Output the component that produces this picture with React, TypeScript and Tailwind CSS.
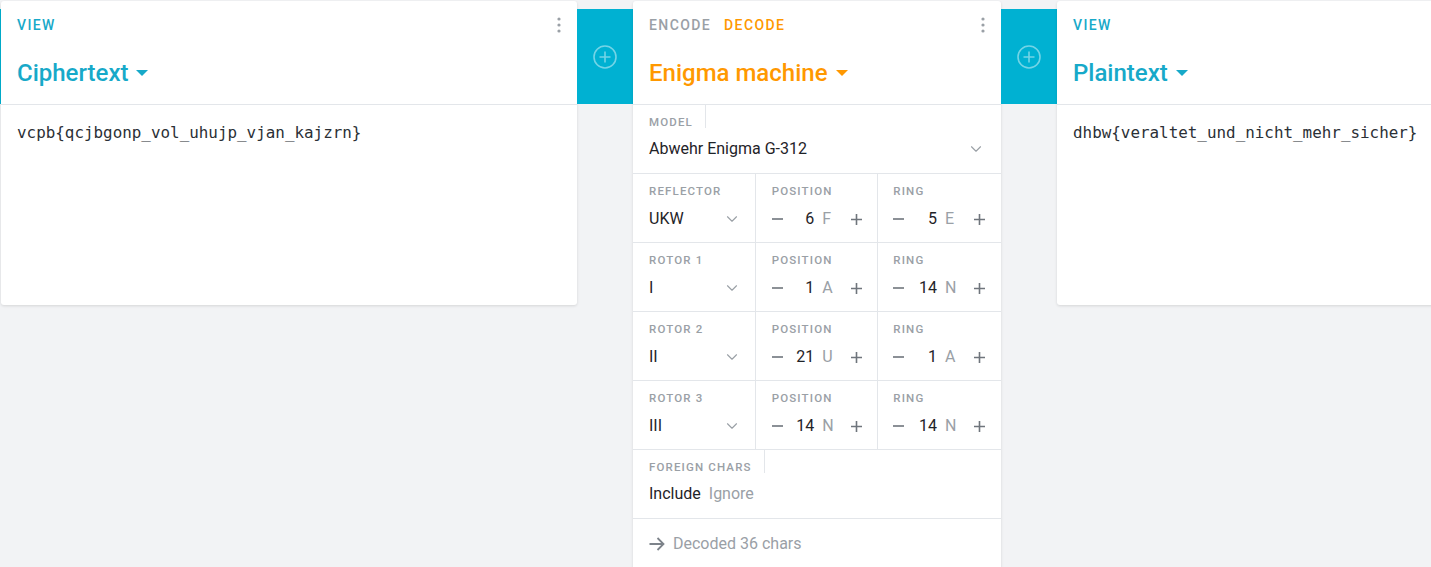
import { ChevronDown } from 'lucide-react';

const font = { fontFamily: 'Roboto, "Liberation Sans", sans-serif' };

function Dots() {
  return (
    <svg width="4" height="16" viewBox="0 0 4 16" className="text-[#9aa0a6]">
      <circle cx="2" cy="2" r="1.6" fill="currentColor" />
      <circle cx="2" cy="8" r="1.6" fill="currentColor" />
      <circle cx="2" cy="14" r="1.6" fill="currentColor" />
    </svg>
  );
}

function Caret({ color }: { color: string }) {
  return (
    <svg width="12" height="6" viewBox="0 0 12 6" className={`ml-[8px] ${color}`}>
      <path d="M0 0 L12 0 L6 6 Z" fill="currentColor" />
    </svg>
  );
}

function Connector() {
  return (
    <div className="w-[56px] flex-none">
      <div className="mt-[8px] flex h-[95px] items-center justify-center bg-[#00b1d2]">
        <svg width="24" height="24" viewBox="0 0 24 24" fill="none" stroke="rgba(255,255,255,0.45)" strokeWidth="1.6">
          <circle cx="12" cy="12" r="11" />
          <path d="M12 6.5v11M6.5 12h11" />
        </svg>
      </div>
    </div>
  );
}

function ViewCard({ title, text, width }: { title: string; text: string; width: string }) {
  return (
    <div className={`${width} h-[304px] flex-none rounded-[3px] bg-white shadow-[0_1px_3px_rgba(0,0,0,0.12)]`}>
      <div className="h-[104px] border-b border-[#e3e6ea] px-[16px] pt-[16px]">
        <div className="flex items-center justify-between">
          <span className="text-[14px] font-medium leading-[16px] tracking-[0.1em] text-[#17a9c9]">VIEW</span>
          <Dots />
        </div>
        <div className="mt-[26px] flex items-center">
          <span className="text-[24px] font-medium leading-[28px] text-[#17a9c9]">{title}</span>
          <Caret color="text-[#17a9c9]" />
        </div>
      </div>
      <div
        className="px-[16px] pt-[18px] text-[15.9px] leading-[20px] text-[#2b3036]"
        style={{ fontFamily: '"DejaVu Sans Mono", "Liberation Mono", monospace' }}
      >
        {text}
      </div>
    </div>
  );
}

function Label({ children, divider }: { children: string; divider?: boolean }) {
  return (
    <div className="flex">
      <div
        className={`pt-[10px] text-[11.5px] font-medium leading-[14px] tracking-[0.1em] text-[#9aa0a6] ${
          divider ? 'h-[23px] border-r border-[#e3e6ea] pr-[12px]' : ''
        }`}
      >
        {children}
      </div>
    </div>
  );
}

function Stepper({ value, letter }: { value: number; letter: string }) {
  return (
    <div className="mt-[11px] flex h-[20px] items-center text-[16px]">
      <svg width="11" height="2" viewBox="0 0 11 2" className="text-[#6f757c]">
        <path d="M0 1h11" stroke="currentColor" strokeWidth="1.6" />
      </svg>
      <span className="flex-1 text-right text-[#1f2328]">{value}</span>
      <span className="ml-[8px] w-[12px] text-[#9aa0a6]">{letter}</span>
      <svg width="11" height="11" viewBox="0 0 11 11" className="ml-[17px] text-[#6f757c]">
        <path d="M0 5.5h11M5.5 0v11" stroke="currentColor" strokeWidth="1.6" />
      </svg>
    </div>
  );
}

const rows = [
  { name: 'REFLECTOR', value: 'UKW', pos: [6, 'F'], ring: [5, 'E'] },
  { name: 'ROTOR 1', value: 'I', pos: [1, 'A'], ring: [14, 'N'] },
  { name: 'ROTOR 2', value: 'II', pos: [21, 'U'], ring: [1, 'A'] },
  { name: 'ROTOR 3', value: 'III', pos: [14, 'N'], ring: [14, 'N'] },
] as const;

function EnigmaCard() {
  return (
    <div className="h-[580px] w-[368px] flex-none rounded-[3px] bg-white shadow-[0_1px_3px_rgba(0,0,0,0.12)]">
      <div className="h-[104px] border-b border-[#e3e6ea] px-[16px] pt-[16px]">
        <div className="flex items-center justify-between">
          <div className="flex gap-[13px] text-[14px] font-medium leading-[16px] tracking-[0.1em]">
            <span className="text-[#9aa0a6]">ENCODE</span>
            <span className="text-[#ff9800]">DECODE</span>
          </div>
          <Dots />
        </div>
        <div className="mt-[26px] flex items-center">
          <span className="text-[24px] font-medium leading-[28px] text-[#ff9800]">Enigma machine</span>
          <Caret color="text-[#ff9800]" />
        </div>
      </div>

      <div className="h-[69px] border-b border-[#e3e6ea] pl-[16px] pr-[16px]">
        <Label divider>MODEL</Label>
        <div className="mt-[11px] flex h-[20px] items-center justify-between">
          <span className="text-[16px] text-[#1f2328]">Abwehr Enigma G-312</span>
          <ChevronDown size={18} strokeWidth={1.5} className="text-[#9aa0a6]" />
        </div>
      </div>

      {rows.map((row) => (
        <div key={row.name} className="grid h-[69px] grid-cols-3 border-b border-[#e3e6ea]">
          <div className="border-r border-[#e3e6ea] pl-[16px] pr-[14px]">
            <Label>{row.name}</Label>
            <div className="mt-[11px] flex h-[20px] items-center justify-between">
              <span className="text-[16px] text-[#1f2328]">{row.value}</span>
              <ChevronDown size={18} strokeWidth={1.5} className="text-[#9aa0a6]" />
            </div>
          </div>
          <div className="border-r border-[#e3e6ea] pl-[16px] pr-[15px]">
            <Label>POSITION</Label>
            <Stepper value={row.pos[0]} letter={row.pos[1]} />
          </div>
          <div className="pl-[15px] pr-[16px]">
            <Label>RING</Label>
            <Stepper value={row.ring[0]} letter={row.ring[1]} />
          </div>
        </div>
      ))}

      <div className="h-[69px] border-b border-[#e3e6ea] px-[16px]">
        <Label divider>FOREIGN CHARS</Label>
        <div className="mt-[11px] flex h-[20px] items-center gap-[8px] text-[16px]">
          <span className="text-[#1f2328]">Include</span>
          <span className="text-[#9aa0a6]">Ignore</span>
        </div>
      </div>

      <div className="flex h-[49px] items-center gap-[8px] px-[16px] text-[16px] text-[#9aa0a6]">
        <svg width="16" height="14" viewBox="0 0 16 14" fill="none" stroke="#7d838a" strokeWidth="1.8">
          <path d="M0.5 7h14M8.5 1l6 6-6 6" />
        </svg>
        <span>Decoded 36 chars</span>
      </div>
    </div>
  );
}

export default function App() {
  return (
    <div className="h-[567px] w-[1431px] overflow-hidden bg-[#f2f3f5]" style={font}>
      <div className="flex pt-[1px]">
        <div className="w-[1px] flex-none">
          <div className="mt-[8px] h-[95px] bg-[#00b1d2]" />
        </div>
        <ViewCard title="Ciphertext" text="vcpb{qcjbgonp_vol_uhujp_vjan_kajzrn}" width="w-[576px]" />
        <Connector />
        <EnigmaCard />
        <Connector />
        <ViewCard title="Plaintext" text="dhbw{veraltet_und_nicht_mehr_sicher}" width="w-[576px]" />
      </div>
    </div>
  );
}
